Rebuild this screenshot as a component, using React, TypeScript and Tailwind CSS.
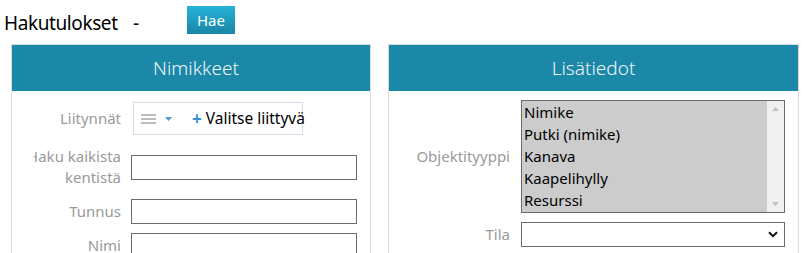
import React from 'react';

const font = { fontFamily: '"Noto Sans", "Open Sans", sans-serif' };

const FieldRow: React.FC<{ label: React.ReactNode; className?: string; children: React.ReactNode }> = ({ label, className, children }) => (
  <div className={`flex items-center ${className ?? ''}`}>
    <div className="ml-[22px] flex w-[87px] shrink-0 flex-col items-end overflow-hidden whitespace-nowrap text-[15px] leading-[21px] text-[#9a9a9a]">
      {label}
    </div>
    <div className="ml-[10px]">{children}</div>
  </div>
);

const TextInput: React.FC = () => (
  <div className="h-[25px] w-[226px] border border-[#6b6b6b] bg-white" />
);

export default function App() {
  const types = ['Nimike', 'Putki (nimike)', 'Kanava', 'Kaapelihylly', 'Resurssi'];

  return (
    <div className="h-[253px] w-[803px] overflow-hidden bg-white" style={font}>
      {/* top bar */}
      <div className="flex h-[44px] items-start">
        <span className="ml-[4px] mt-[11px] w-[129px] text-[19px] leading-[24px] tracking-[-0.4px] text-black">Hakutulokset</span>
        <span className="mt-[11px] w-[54px] text-[19px] leading-[24px] text-black">-</span>
        <button className="mt-[6px] h-[28px] w-[48px] bg-gradient-to-b from-[#25b3da] to-[#1a86a6] text-[15px] text-white">
          Hae
        </button>
      </div>

      <div className="flex items-start">
        {/* Nimikkeet */}
        <div className="ml-[11px] h-[220px] w-[360px] border border-b-0 border-[#dcdcdc]">
          <div className="flex h-[46px] items-center justify-center bg-[#1c88a7] pl-[10px] text-[19px] font-light text-[#eef7fa]">
            Nimikkeet
          </div>
          <div className="flex flex-col pt-[11px]">
            <FieldRow label="Liitynnät">
              <div className="ml-[2px] flex h-[33px] w-[170px] items-center border border-[#d6dce8] bg-white">
                <div className="flex h-full items-center pl-[7px]">
                  <svg width="15" height="10" viewBox="0 0 15 10" className="text-[#7a7a7a]">
                    <path d="M0 1h15M0 5h15M0 9h15" stroke="currentColor" strokeWidth="1" />
                  </svg>
                  <svg width="7" height="4" viewBox="0 0 7 4" className="ml-[9px] text-[#4a9ed8]">
                    <path d="M0 0h7L3.5 4z" fill="currentColor" />
                  </svg>
                </div>
                <div className="ml-[10px] h-[29px] w-[2px] bg-[#2f74ac]" />
                <div className="ml-[10px] flex items-center whitespace-nowrap text-[15.5px] text-black">
                  <span className="mr-[4px] text-[17px] font-bold leading-none text-[#3a8fd2]">+</span>
                  Valitse liittyvä
                </div>
              </div>
            </FieldRow>
            <FieldRow
              className="mt-[11px]"
              label={
                <>
                  <span>Haku kaikista</span>
                  <span>kentistä</span>
                </>
              }
            >
              <TextInput />
            </FieldRow>
            <FieldRow className="mt-[11px]" label="Tunnus">
              <TextInput />
            </FieldRow>
            <FieldRow className="mt-[9px]" label="Nimi">
              <TextInput />
            </FieldRow>
          </div>
        </div>

        {/* Lisätiedot */}
        <div className="ml-[17px] h-[220px] w-[411px] border border-b-0 border-[#dcdcdc]">
          <div className="flex h-[46px] items-center justify-center bg-[#1c88a7] text-[19px] font-light text-[#eef7fa]">
            Lisätiedot
          </div>
          <div className="flex flex-col pt-[9px]">
            <div className="flex items-center">
              <div className="w-[121px] shrink-0 text-right text-[15px] text-[#9a9a9a]">Objektityyppi</div>
              <div className="ml-[11px] flex h-[113px] w-[264px] border border-[#6b6b6b] bg-[#cccccc]">
                <div className="flex-1 pl-[2px] text-[15px] leading-[22px] text-black">
                  {types.map((t) => (
                    <div key={t} className="h-[22px] whitespace-nowrap">{t}</div>
                  ))}
                </div>
                <div className="flex w-[17px] flex-col items-center justify-between bg-[#f0f0f0] py-[6px]">
                  <svg width="7" height="4" viewBox="0 0 7 4"><path d="M0 4h7L3.5 0z" fill="#c2c2c2" /></svg>
                  <svg width="7" height="4" viewBox="0 0 7 4"><path d="M0 0h7L3.5 4z" fill="#c2c2c2" /></svg>
                </div>
              </div>
            </div>
            <div className="mt-[9px] flex items-center">
              <div className="w-[121px] shrink-0 text-right text-[15px] text-[#9a9a9a]">Tila</div>
              <div className="ml-[11px] flex h-[25px] w-[264px] items-center justify-end border border-[#6b6b6b] bg-white pr-[6px]">
                <svg width="10" height="7" viewBox="0 0 10 7">
                  <path d="M1 1.2l4 4 4-4" stroke="#111" strokeWidth="2" fill="none" />
                </svg>
              </div>
            </div>
          </div>
        </div>
      </div>
    </div>
  );
}
